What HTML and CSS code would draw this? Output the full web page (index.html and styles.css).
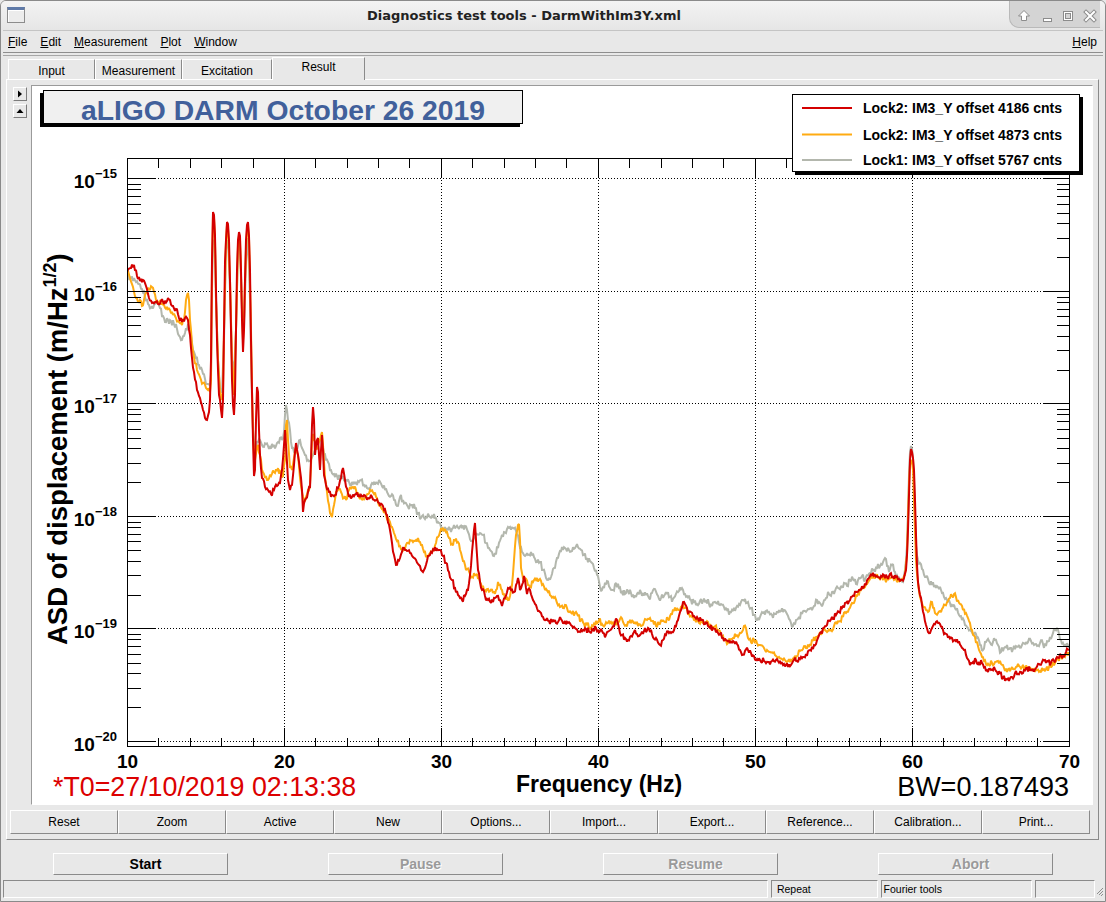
FILE: index.html
```html
<!DOCTYPE html>
<html>
<head>
<meta charset="utf-8">
<title>Diagnostics test tools - DarmWithIm3Y.xml</title>
<link rel="stylesheet" href="styles.css">
</head>
<body>
<div class="window">
  <div class="titlebar">
    <div class="win-icon"></div>
    <div class="title">Diagnostics test tools - DarmWithIm3Y.xml</div>
    <div class="win-btns">
      <svg width="91" height="27" viewBox="0 0 91 27">
        <path d="M14 9.5 L19.5 15 H16.5 V19.5 H11.5 V15 H8.5 Z" fill="#fff" stroke="#8c8c8c" stroke-width="1"/>
        <rect x="33.5" y="17.5" width="8" height="3" fill="#fff" stroke="#8c8c8c"/>
        <rect x="53.5" y="10.5" width="9" height="9" fill="none" stroke="#8c8c8c"/>
        <rect x="55.5" y="12.5" width="5" height="5" fill="none" stroke="#8c8c8c"/>
        <rect x="54.5" y="11.5" width="7" height="7" fill="none" stroke="#fff"/>
        <path d="M76 11 L84 19 M84 11 L76 19" stroke="#8c8c8c" stroke-width="4" stroke-linecap="square"/>
        <path d="M76 11 L84 19 M84 11 L76 19" stroke="#fff" stroke-width="2" stroke-linecap="square"/>
      </svg>
    </div>
  </div>
  <div class="frame">
    <div class="menubar">
      <span class="mi"><u>F</u>ile</span>
      <span class="mi"><u>E</u>dit</span>
      <span class="mi"><u>M</u>easurement</span>
      <span class="mi"><u>P</u>lot</span>
      <span class="mi"><u>W</u>indow</span>
      <span class="mi help"><u>H</u>elp</span>
    </div>
    <div class="tabarea">
      <div class="tabs">
        <div class="tab w87">Input</div>
        <div class="tab w87">Measurement</div>
        <div class="tab w90">Excitation</div>
        <div class="tab w93 active">Result</div>
      </div>
      <div class="panel">
        <div class="main">
          <div class="side">
            <div class="mini"><svg width="12" height="12" viewBox="0 0 12 12"><path d="M4 2.5 L8 6 L4 9.5 Z" fill="#000"/></svg></div>
            <div class="mini"><svg width="12" height="12" viewBox="0 0 12 12"><path d="M2.5 8 L6 4 L9.5 8 Z" fill="#000"/></svg></div>
          </div>
          <div class="canvas">
            <svg id="plot" width="1060" height="718" viewBox="32 86 1060 718">
              <defs>
                <clipPath id="frameclip"><rect x="128" y="159" width="941" height="587"/></clipPath>
              </defs>
              <g class="grid">
                <line x1="127.5" y1="178.5" x2="1069.5" y2="178.5"/>
                <line x1="127.5" y1="291.5" x2="1069.5" y2="291.5"/>
                <line x1="127.5" y1="403.5" x2="1069.5" y2="403.5"/>
                <line x1="127.5" y1="516.5" x2="1069.5" y2="516.5"/>
                <line x1="127.5" y1="628.5" x2="1069.5" y2="628.5"/>
                <line x1="127.5" y1="741.5" x2="1069.5" y2="741.5"/>
                <line x1="284.5" y1="158.5" x2="284.5" y2="746.5"/>
                <line x1="441.5" y1="158.5" x2="441.5" y2="746.5"/>
                <line x1="598.5" y1="158.5" x2="598.5" y2="746.5"/>
                <line x1="755.5" y1="158.5" x2="755.5" y2="746.5"/>
                <line x1="912.5" y1="158.5" x2="912.5" y2="746.5"/>
              </g>
              <g clip-path="url(#frameclip)" class="traces">
                <polyline id="tr-gray" class="tr gray" points=""/>
                <polyline id="tr-orange" class="tr orange" points=""/>
                <polyline id="tr-red" class="tr red" points=""/>
              </g>
              <rect class="axframe" x="127.5" y="158.5" width="942" height="588"/>
              <path id="ticks" class="ticks" d=""/>
              <g class="lbl">
                <text x="117" y="187.5" text-anchor="end">10<tspan class="sup" dy="-10">−15</tspan></text>
                <text x="117" y="300.5" text-anchor="end">10<tspan class="sup" dy="-10">−16</tspan></text>
                <text x="117" y="412.5" text-anchor="end">10<tspan class="sup" dy="-10">−17</tspan></text>
                <text x="117" y="525.5" text-anchor="end">10<tspan class="sup" dy="-10">−18</tspan></text>
                <text x="117" y="637.5" text-anchor="end">10<tspan class="sup" dy="-10">−19</tspan></text>
                <text x="117" y="750.5" text-anchor="end">10<tspan class="sup" dy="-10">−20</tspan></text>
              </g>
              <g class="lbl" text-anchor="middle">
                <text x="127.5" y="768">10</text>
                <text x="284.5" y="768">20</text>
                <text x="441.5" y="768">30</text>
                <text x="598.5" y="768">40</text>
                <text x="755.5" y="768">50</text>
                <text x="912.5" y="768">60</text>
                <text x="1069.5" y="768">70</text>
              </g>
              <text class="axtitle" transform="translate(67 645) rotate(-90)">ASD of displacement (m/Hz<tspan class="axsup" dy="-11">1/2</tspan><tspan dy="11">)</tspan></text>
              <text class="xtitle" x="599" y="792" text-anchor="middle">Frequency (Hz)</text>
              <text class="t0" x="53" y="796">*T0=27/10/2019 02:13:38</text>
              <text class="bw" x="1069" y="796" text-anchor="end">BW=0.187493</text>
              <rect x="40" y="93" width="480" height="34" fill="#000"/>
              <rect class="pave" x="43.5" y="90.5" width="479" height="33"/>
              <text class="ptitle" x="283" y="120" text-anchor="middle">aLIGO DARM October 26 2019</text>
              <rect x="795" y="97" width="288" height="78" fill="#000"/>
              <rect class="legbox" x="792.5" y="94.5" width="287" height="77"/>
              <line x1="802" y1="108" x2="852" y2="108" stroke="#d40000" stroke-width="2"/>
              <line x1="802" y1="134.5" x2="852" y2="134.5" stroke="#ffab12" stroke-width="2"/>
              <line x1="802" y1="160" x2="852" y2="160" stroke="#b3b7ad" stroke-width="2"/>
              <text class="leg" x="863" y="113">Lock2: IM3_Y offset 4186 cnts</text>
              <text class="leg" x="863" y="139.5">Lock2: IM3_Y offset 4873 cnts</text>
              <text class="leg" x="863" y="165">Lock1: IM3_Y offset 5767 cnts</text>
            </svg>
          </div>
        </div>
        <div class="btnrow">
          <div class="btn">Reset</div>
          <div class="btn">Zoom</div>
          <div class="btn">Active</div>
          <div class="btn">New</div>
          <div class="btn">Options...</div>
          <div class="btn">Import...</div>
          <div class="btn">Export...</div>
          <div class="btn">Reference...</div>
          <div class="btn">Calibration...</div>
          <div class="btn">Print...</div>
        </div>
      </div>
    </div>
    <div class="ctrlrow">
      <div class="cell"><div class="cbtn">Start</div></div>
      <div class="cell"><div class="cbtn dis">Pause</div></div>
      <div class="cell"><div class="cbtn dis">Resume</div></div>
      <div class="cell"><div class="cbtn dis">Abort</div></div>
    </div>
    <div class="status">
      <div class="sc s1"></div>
      <div class="sc s2">Repeat</div>
      <div class="sc s3">Fourier tools</div>
      <div class="sc s4"></div>
      <svg class="grip" width="6" height="14" viewBox="0 0 6 14">
        <path d="M6 4 L0 10 M6 7 L2 11 M6 10 L4 12" stroke="#8c8c8c" stroke-width="1"/>
      </svg>
    </div>
  </div>
</div>
<script src="script.js"></script>
</body>
</html>
```

FILE: styles.css
```css
* { box-sizing: border-box; }
html, body { margin: 0; padding: 0; }
body {
  width: 1106px; height: 902px; overflow: hidden;
  background: #e8e8e8;
  font-family: "Liberation Sans", Arial, sans-serif;
  font-size: 12px; color: #000;
}
.window {
  width: 1106px; height: 902px;
  display: flex; flex-direction: column;
  background: #e8e8e8;
  border: 1px solid #8a8a8a;
  border-radius: 6px 6px 0 0;
  overflow: hidden;
}
.titlebar {
  height: 29px; flex: none;
  display: flex; align-items: flex-start;
  background: linear-gradient(#f3f3f3, #e6e6e6);
}
.win-icon {
  width: 18px; height: 16px; margin: 6px 0 0 6px; flex: none;
  background: #ececec;
  border: 1px solid #8c8c8c;
  border-top: 3px solid #5f7aa8;
  box-shadow: inset 1px 1px 0 #fff;
}
.title {
  flex: 1; text-align: center; padding-left: 14px;
  font: bold 13px "DejaVu Sans", sans-serif;
  line-height: 29px; color: #222;
}
.win-btns {
  width: 91px; height: 27px; flex: none; margin-right: 5px;
  background: #d4d4d4;
  border-left: 1px solid #b9b9b9; border-bottom: 1px solid #b9b9b9;
  border-bottom-left-radius: 10px;
}
.win-btns svg { display: block; }
.frame {
  flex: 1; display: flex; flex-direction: column;
  padding: 0 2px 3px 2px;
}
.menubar {
  height: 23px; flex: none;
  display: flex; align-items: center; gap: 13px;
  padding: 0 6px 0 5px;
  border-top: 1px solid #c4c4c4; border-bottom: 1px solid #8e8e8e;
  font-size: 12px;
}
.mi u { text-decoration: underline; text-underline-offset: 1px; }
.help { margin-left: auto; }
.tabarea {
  margin-top: 2px; border-top: 1px solid #a6a6a6;
  display: flex; flex-direction: column;
}
.tabs {
  height: 23px; display: flex; align-items: flex-end;
  padding-left: 5px; position: relative; z-index: 2;
}
.tab {
  height: 20px; text-align: center; line-height: 20px;
  border-top: 1px solid #fff; border-left: 1px solid #fff;
  border-right: 1px solid #8a8a8a;
  background: #e8e8e8; font-size: 12px;
  padding-top: 1px;
}
.w87 { width: 87px; }
.w90 { width: 90px; }
.w93 { width: 93px; }
.tab.active {
  height: 23px; margin-bottom: -1px; line-height: 19px; padding-top: 0;
}
.panel {
  margin-left: 3px; width: 1093px;
  border-top: 1px solid #fff; border-left: 1px solid #fff;
  border-right: 1px solid #8a8a8a; border-bottom: 1px solid #8a8a8a;
  display: flex; flex-direction: column;
  padding: 5px 0 5px 0;
}
.main { display: flex; align-items: flex-start; }
.side {
  width: 14px; margin: 2px 4px 0 6px;
  display: flex; flex-direction: column; gap: 3px;
}
.mini {
  width: 14px; height: 14px;
  border-top: 1px solid #fff; border-left: 1px solid #fff;
  border-right: 1px solid #7c7c7c; border-bottom: 1px solid #7c7c7c;
  display: flex; align-items: center; justify-content: center;
}
.mini svg { display: block; }
.canvas {
  width: 1062px; height: 720px;
  border-top: 1px solid #9a9a9a; border-left: 1px solid #9a9a9a;
  border-right: 1px solid #fff; border-bottom: 1px solid #fff;
  background: #fff;
}
.canvas svg { display: block; }
.btnrow {
  display: flex; margin: 5px 0 0 3px;
}
.btn {
  width: 108px; height: 24px; line-height: 22px; text-align: center;
  border-top: 1px solid #fff; border-left: 1px solid #fff;
  border-right: 1px solid #8a8a8a; border-bottom: 1px solid #8a8a8a;
  font-size: 12px;
}
.ctrlrow {
  height: 40px; flex: none;
  display: grid; grid-template-columns: repeat(4, 275px);
  padding-top: 13px;
}
.cell { display: flex; justify-content: center; }
.cbtn {
  width: 175px; height: 22px; line-height: 20px; text-align: center;
  padding-left: 10px;
  border-top: 1px solid #fff; border-left: 1px solid #fff;
  border-right: 1px solid #8a8a8a; border-bottom: 1px solid #8a8a8a;
  font-weight: bold; font-size: 14px;
}
.cbtn.dis { color: #9a9a9a; text-shadow: 1px 1px 0 #fff; }
.status {
  height: 18px; flex: none;
  display: flex; gap: 3px; align-items: stretch;
}
.sc {
  border-top: 1px solid #8a8a8a; border-left: 1px solid #8a8a8a;
  border-right: 1px solid #fff; border-bottom: 1px solid #fff;
  font-size: 10.5px; line-height: 16px; white-space: nowrap;
}
.s1 { width: 767px; }
.s2 { width: 107px; padding-left: 5px; }
.s3 { width: 152px; padding-left: 2px; }
.s4 { width: 60px; }
.grip { align-self: flex-end; margin-left: -1px; }

/* plot */
.grid line { stroke: #000; stroke-width: 1; stroke-dasharray: 1 2; shape-rendering: crispEdges; }
.tr { fill: none; stroke-width: 2; stroke-linejoin: miter; stroke-miterlimit: 2; }
.tr.red { stroke: #d40000; }
.tr.orange { stroke: #ffab12; }
.tr.gray { stroke: #b3b7ad; }
.axframe { fill: none; stroke: #000; stroke-width: 1; shape-rendering: crispEdges; }
.ticks { fill: none; stroke: #000; stroke-width: 1; shape-rendering: crispEdges; }
.lbl { font-family: "Liberation Sans", Arial, sans-serif; font-weight: bold; font-size: 19px; fill: #000; }
.sup { font-size: 13px; }
.axtitle { font-family: "Liberation Sans", Arial, sans-serif; font-weight: bold; font-size: 27.5px; fill: #000; }
.axsup { font-size: 18px; }
.xtitle { font-family: "Liberation Sans", Arial, sans-serif; font-weight: bold; font-size: 23px; fill: #000; }
.t0 { font-family: "Liberation Sans", Arial, sans-serif; font-size: 26.8px; fill: #dc0000; }
.bw { font-family: "Liberation Sans", Arial, sans-serif; font-size: 27px; fill: #000; }
.pave { fill: #f0f0f0; stroke: #000; stroke-width: 1; shape-rendering: crispEdges; }
.ptitle { font-family: "Liberation Sans", Arial, sans-serif; font-weight: bold; font-size: 28.3px; fill: #41609b; }
.legbox { fill: #fff; stroke: #000; stroke-width: 1; shape-rendering: crispEdges; }
.leg { font-family: "Liberation Sans", Arial, sans-serif; font-weight: bold; font-size: 14px; fill: #000; }
```

FILE: script.js
```js
(function () {
  function rng(seed) {
    return function () {
      seed = (seed * 1664525 + 1013904223) % 4294967296;
      return seed / 4294967296;
    };
  }
  function build(a, seed, amp) {
    var r = rng(seed), pts = [];
    for (var i = 0; i < a.length - 1; i++) {
      var x0 = a[i][0], y0 = a[i][1], x1 = a[i + 1][0], y1 = a[i + 1][1];
      var steep = Math.abs(y1 - y0) > 25;
      pts.push(x0 + ',' + y0);
      var n = Math.max(1, Math.round((x1 - x0) / 1.1));
      for (var k = 1; k < n; k++) {
        var t = k / n;
        var noise = steep ? 0 : (r() - 0.5) * 2 * amp;
        var y = y0 + (y1 - y0) * t + noise;
        pts.push((x0 + (x1 - x0) * t).toFixed(1) + ',' + y.toFixed(1));
      }
    }
    var l = a[a.length - 1];
    pts.push(l[0] + ',' + l[1]);
    return pts.join(' ');
  }
  var red = [[127,272],[131,268],[134,265],[137,276],[140,281],[143,280],[146,286],[149,298],[152,303],[155,302],[158,304],[161,301],[164,304],[167,301],[170,300],[173,306],[176,309],[179,318],[182,322],[185,318],[188,320],[190,335],[192,358],[194,372],[197,390],[200,398],[203,410],[205,418],[207,420],[209,412],[210,400],[211,360],[212,260],[213,212],[214,215],[215,235],[216,290],[217,340],[218,370],[219,395],[221,410],[222,418],[223,400],[224,330],[225,262],[226,240],[227,222],[228,224],[229,240],[230,280],[231,330],[232,380],[233,405],[234,415],[235,395],[236,330],[237,270],[238,240],[239,232],[240,236],[241,270],[242,320],[243,352],[244,330],[245,280],[246,240],[247,225],[248,222],[249,236],[250,270],[251,340],[252,392],[253,440],[254,476],[255,470],[256,420],[257,387],[258,392],[259,430],[260,455],[262,478],[265,487],[268,490],[271,494],[274,490],[277,486],[280,483],[282,470],[284,445],[285,430],[286,445],[288,480],[290,490],[292,485],[294,465],[296,443],[298,455],[300,470],[302,490],[303,512],[305,500],[308,492],[310,488],[311,460],[312,425],[313,407],[314,420],[315,455],[317,440],[318,438],[319,455],[320,470],[321,450],[322,435],[323,450],[324,475],[326,485],[329,492],[332,495],[335,495],[338,488],[341,478],[343,468],[345,480],[348,493],[352,497],[356,494],[360,497],[364,495],[368,498],[372,497],[376,500],[380,505],[384,510],[387,515],[390,530],[392,543],[394,555],[396,565],[398,560],[400,558],[402,552],[404,548],[407,551],[410,553],[413,557],[416,560],[419,565],[421,570],[423,572],[425,568],[428,556],[431,552],[434,550],[437,549],[440,550],[443,556],[446,563],[449,572],[452,580],[455,588],[458,595],[460,598],[462,600],[465,596],[468,590],[470,575],[472,552],[474,530],[475,523],[476,540],[478,570],[480,582],[482,590],[485,596],[488,600],[491,603],[493,602],[495,598],[497,596],[499,600],[502,606],[505,598],[508,588],[511,590],[514,592],[516,585],[518,578],[520,590],[522,585],[524,576],[526,588],[527,594],[530,590],[533,600],[536,605],[540,612],[543,617],[546,620],[549,621],[552,622],[555,620],[558,622],[561,619],[565,621],[568,623],[572,626],[576,629],[580,632],[583,630],[586,629],[590,632],[593,630],[596,628],[600,631],[603,633],[606,635],[609,631],[612,628],[615,622],[617,620],[619,628],[622,635],[625,638],[628,640],[631,636],[634,632],[637,634],[640,635],[644,631],[648,628],[652,634],[656,638],[660,645],[663,640],[666,635],[669,633],[672,632],[675,626],[678,620],[681,610],[683,602],[685,604],[688,614],[691,612],[694,616],[697,617],[701,620],[705,624],[709,627],[713,628],[717,631],[720,634],[723,638],[726,640],[730,643],[734,642],[737,644],[740,650],[742,655],[745,651],[748,650],[751,653],[754,656],[757,659],[760,660],[764,661],[768,662],[772,661],[776,660],[780,661],[784,664],[788,667],[791,665],[794,660],[797,661],[800,659],[803,657],[806,654],[810,650],[814,645],[818,638],[821,632],[824,628],[827,625],[830,621],[833,619],[836,615],[839,612],[842,608],[845,603],[848,604],[851,597],[854,596],[857,592],[860,590],[863,588],[866,585],[869,578],[872,576],[875,575],[878,577],[881,576],[884,575],[887,577],[890,574],[893,576],[896,577],[899,579],[902,580],[904,578],[906,570],[907,555],[908,530],[909,495],[910,460],[911,449],[912,452],[913,458],[914,470],[915,500],[916,535],[917,565],[918,582],[920,595],[922,605],[924,615],[926,625],[928,632],[930,633],[932,628],[934,624],[936,622],[938,623],[940,624],[943,630],[946,634],[949,636],[952,638],[955,640],[958,643],[961,646],[964,650],[967,658],[970,665],[973,662],[976,660],[979,662],[982,663],[985,667],[988,672],[991,670],[994,667],[997,672],[1000,673],[1003,678],[1006,679],[1009,681],[1012,677],[1015,673],[1018,674],[1021,672],[1024,670],[1027,668],[1030,670],[1033,669],[1036,668],[1039,664],[1042,662],[1045,660],[1048,662],[1051,663],[1054,661],[1057,657],[1060,654],[1063,656],[1066,652],[1069,650]];
  var orange = [[127,270],[130,278],[133,287],[136,298],[138,302],[140,300],[142,306],[144,300],[146,293],[149,289],[152,287],[154,292],[156,300],[158,303],[161,304],[164,305],[167,307],[170,310],[173,315],[176,318],[179,322],[182,325],[184,320],[186,300],[188,293],[189,300],[190,320],[192,345],[194,357],[197,370],[200,377],[203,383],[206,388],[208,390],[210,392],[211,380],[212,270],[213,215],[214,218],[215,240],[216,300],[218,360],[220,392],[222,400],[223,390],[224,330],[226,242],[227,225],[228,228],[230,280],[232,360],[234,395],[236,330],[238,245],[239,236],[240,240],[242,310],[243,340],[244,320],[246,250],[247,230],[248,226],[249,238],[251,330],[252,390],[253,430],[254,455],[255,460],[257,447],[258,445],[260,455],[262,470],[265,478],[268,480],[271,476],[274,472],[277,471],[280,471],[283,476],[285,460],[286,425],[287,420],[288,440],[290,468],[292,470],[294,458],[296,447],[298,455],[300,478],[302,492],[304,500],[306,497],[308,490],[310,485],[311,465],[312,440],[313,434],[314,440],[316,448],[318,445],[320,440],[322,432],[323,445],[325,478],[327,492],[329,505],[331,515],[332,517],[334,505],[336,492],[338,490],[341,492],[344,498],[346,500],[348,492],[350,487],[353,487],[356,490],[359,497],[362,500],[365,497],[368,494],[371,491],[374,494],[377,498],[380,505],[383,510],[386,515],[389,520],[392,527],[394,533],[397,541],[400,546],[402,549],[404,548],[407,543],[410,540],[413,542],[416,540],[418,538],[420,542],[422,545],[424,552],[426,557],[428,556],[430,553],[432,552],[434,550],[436,543],[438,537],[440,532],[442,530],[445,529],[447,532],[449,538],[452,544],[455,541],[458,542],[460,550],[462,557],[465,565],[467,569],[470,574],[472,577],[475,575],[477,574],[480,582],[482,588],[485,590],[488,589],[490,591],[493,593],[496,590],[498,582],[500,584],[502,590],[505,598],[508,600],[510,596],[512,585],[514,560],[516,535],[518,525],[519,524],[520,540],[521,568],[523,578],[525,578],[528,585],[530,587],[533,582],[536,580],[539,580],[542,585],[545,590],[548,592],[551,596],[554,598],[557,603],[560,607],[563,608],[566,605],[569,612],[572,614],[575,613],[578,616],[581,620],[584,624],[587,625],[590,627],[593,626],[596,621],[599,620],[602,624],[605,625],[608,623],[611,622],[614,625],[617,623],[620,619],[623,622],[626,625],[629,623],[632,620],[635,622],[638,626],[641,626],[644,622],[647,620],[650,618],[653,621],[656,626],[659,624],[662,621],[665,622],[668,619],[671,614],[674,611],[677,608],[680,610],[683,605],[686,608],[689,614],[692,617],[695,619],[698,621],[702,622],[706,623],[710,624],[714,627],[718,630],[721,635],[724,640],[727,644],[730,640],[733,638],[736,636],[739,635],[742,632],[744,626],[746,628],[748,638],[751,642],[754,640],[757,643],[760,645],[764,648],[767,650],[770,652],[773,653],[776,656],[779,657],[782,659],[785,660],[788,661],[791,660],[794,658],[797,656],[800,651],[803,649],[806,648],[810,644],[813,641],[816,637],[819,635],[822,633],[825,630],[828,631],[831,630],[834,626],[837,624],[840,621],[843,617],[846,613],[849,609],[852,603],[855,600],[858,594],[861,590],[864,588],[867,584],[870,579],[873,576],[876,576],[879,578],[882,577],[885,579],[888,580],[891,578],[894,580],[897,582],[900,581],[903,580],[905,575],[907,555],[908,520],[909,485],[910,465],[911,460],[912,462],[913,470],[914,500],[915,530],[916,560],[918,583],[920,597],[922,603],[924,607],[926,610],[928,612],[930,607],[932,602],[934,608],[936,614],[938,613],[940,611],[942,609],[945,605],[948,601],[950,598],[952,596],[954,594],[956,597],[958,600],[960,604],[962,606],[964,609],[966,613],[968,618],[970,623],[972,630],[975,637],[978,646],[980,652],[982,657],[984,661],[986,664],[989,665],[992,663],[995,662],[998,661],[1001,664],[1004,668],[1007,672],[1010,671],[1013,669],[1016,667],[1019,666],[1022,667],[1025,668],[1028,669],[1031,670],[1034,669],[1037,670],[1040,671],[1043,670],[1046,669],[1049,667],[1052,666],[1055,663],[1058,659],[1061,657],[1064,656],[1066,654],[1069,652]];
  var gray = [[127,277],[130,279],[133,281],[136,282],[139,284],[142,289],[145,297],[148,304],[151,308],[154,305],[157,303],[160,308],[163,316],[165,322],[168,320],[171,321],[174,324],[177,329],[180,337],[182,340],[185,333],[188,324],[190,332],[193,350],[196,358],[199,365],[202,370],[205,379],[208,384],[210,386],[211,375],[212,290],[213,240],[215,245],[216,300],[218,360],[220,388],[222,392],[224,340],[226,250],[228,240],[230,290],[232,360],[234,372],[236,330],[238,250],[240,245],[242,310],[244,330],[246,262],[248,238],[250,300],[251,355],[252,400],[253,430],[254,445],[256,447],[258,442],[260,440],[262,445],[264,447],[266,444],[268,446],[270,447],[272,444],[274,445],[276,446],[278,442],[280,438],[282,440],[284,432],[285,415],[286,405],[287,410],[288,420],[290,430],[292,448],[294,452],[297,450],[300,440],[302,448],[305,455],[308,460],[310,461],[313,455],[315,450],[317,445],[320,440],[322,446],[325,454],[328,462],[331,470],[334,474],[337,476],[340,479],[343,476],[346,480],[349,482],[352,482],[355,484],[358,481],[361,480],[364,485],[367,488],[370,490],[373,484],[376,482],[379,480],[382,486],[385,490],[388,494],[391,496],[394,500],[397,506],[400,497],[403,500],[406,503],[409,509],[412,505],[415,508],[418,513],[420,519],[423,515],[426,517],[429,516],[432,516],[435,518],[438,522],[441,527],[444,530],[447,528],[450,529],[453,528],[456,527],[459,529],[462,528],[465,526],[468,532],[471,541],[474,538],[477,534],[480,533],[483,535],[486,543],[489,548],[492,552],[495,553],[498,548],[501,538],[504,532],[507,529],[510,527],[513,528],[516,531],[519,542],[522,552],[525,556],[528,555],[531,552],[534,557],[537,562],[540,562],[543,570],[546,578],[548,580],[551,577],[554,568],[557,558],[560,551],[563,550],[566,549],[569,550],[572,551],[575,548],[578,547],[581,550],[584,555],[587,558],[590,561],[593,564],[596,570],[598,576],[600,587],[602,590],[604,588],[607,581],[610,588],[613,590],[616,583],[619,588],[622,592],[625,594],[628,591],[631,593],[634,598],[637,594],[640,590],[643,594],[646,595],[649,598],[652,593],[655,589],[658,596],[661,598],[664,596],[667,594],[670,597],[673,599],[676,594],[679,591],[682,588],[685,594],[688,598],[691,600],[694,603],[697,604],[700,601],[703,601],[706,600],[709,604],[712,606],[715,602],[718,601],[721,604],[724,607],[727,610],[730,612],[733,611],[736,608],[739,604],[742,600],[745,599],[748,602],[751,608],[754,615],[757,620],[760,617],[763,613],[766,611],[769,612],[772,615],[775,614],[778,613],[781,611],[784,610],[787,614],[790,620],[793,626],[796,620],[799,617],[802,614],[805,611],[808,609],[811,608],[814,606],[817,600],[820,603],[823,604],[826,598],[829,594],[832,592],[835,591],[838,588],[841,586],[844,583],[847,586],[850,580],[853,579],[856,584],[859,578],[862,576],[865,580],[868,576],[871,573],[874,569],[877,568],[880,566],[883,562],[885,558],[887,566],[889,572],[892,565],[895,572],[898,578],[901,581],[903,582],[905,570],[907,545],[908,510],[909,475],[910,452],[911,446],[912,449],[913,458],[914,480],[915,515],[916,545],[918,560],[920,563],[923,570],[926,577],[929,583],[932,585],[935,585],[938,587],[941,590],[944,597],[947,600],[950,603],[953,606],[956,610],[959,615],[962,620],[965,625],[968,628],[971,631],[974,634],[977,638],[980,645],[983,650],[986,642],[989,641],[992,645],[995,640],[998,645],[1001,652],[1004,648],[1007,645],[1010,648],[1013,649],[1016,646],[1019,645],[1022,645],[1025,644],[1028,642],[1031,641],[1034,645],[1037,646],[1040,643],[1043,644],[1046,646],[1049,641],[1052,636],[1055,630],[1057,628],[1059,634],[1061,640],[1063,643],[1065,645],[1069,648]];

  document.getElementById('tr-red').setAttribute('points', build(red, 11, 3.0));
  document.getElementById('tr-orange').setAttribute('points', build(orange, 23, 3.0));
  document.getElementById('tr-gray').setAttribute('points', build(gray, 37, 3.4));

  var L = 127.5, R = 1069.5, T = 158.5, B = 746.5;
  var maj = [178.5, 291.5, 403.5, 516.5, 628.5, 741.5];
  var d = [];
  function h(y, len) {
    d.push('M' + L + ' ' + y + 'H' + (L + len));
    d.push('M' + R + ' ' + y + 'H' + (R - len));
  }
  for (var i = 0; i < maj.length; i++) {
    h(maj[i], 27);
    if (i < maj.length - 1) {
      var step = maj[i + 1] - maj[i];
      for (var m = 2; m <= 9; m++) {
        var y = Math.round(maj[i + 1] - Math.log10(m) * step) + 0.5;
        h(y, 13);
      }
    }
  }
  for (var f = 10; f <= 70; f += 2) {
    var x = Math.round(127.5 + (f - 10) * 15.6917 - 0.5) + 0.5;
    var len = (f % 10 === 0) ? 19 : 9;
    d.push('M' + x + ' ' + B + 'V' + (B - len));
    d.push('M' + x + ' ' + T + 'V' + (T + len));
  }
  document.getElementById('ticks').setAttribute('d', d.join(''));
})();
```
